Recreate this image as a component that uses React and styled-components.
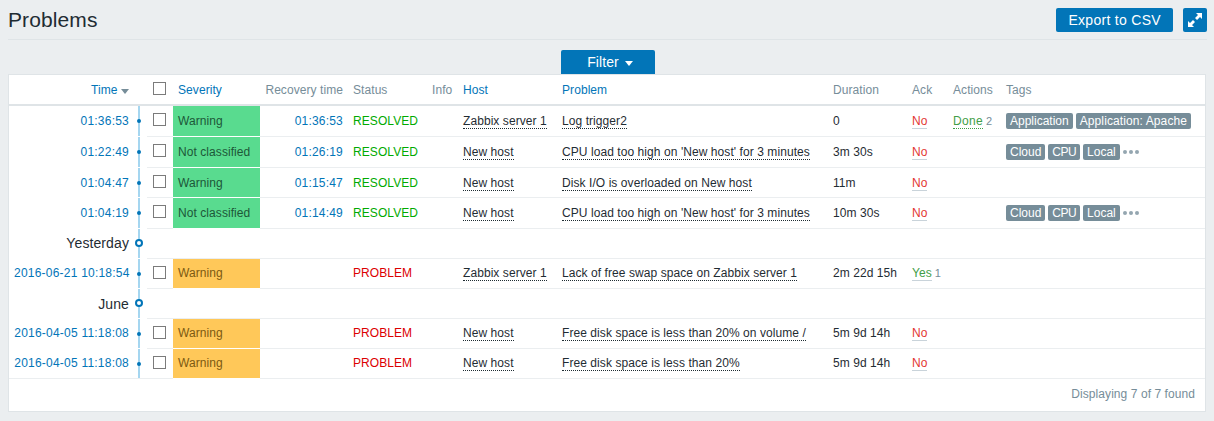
import React from "react";
import styled, { createGlobalStyle } from "styled-components";

const GlobalStyle = createGlobalStyle`
  html, body {
    margin: 0;
    padding: 0;
    background: #ebeef0;
    color: #1f2c33;
    font-family: "Liberation Sans", Arial, sans-serif;
    font-size: 12px;
    letter-spacing: 0.07px;
  }
`;

const Page = styled.div`
  padding: 8px 7px 9px 8px;
`;

const Header = styled.header`
  display: flex;
  align-items: flex-start;
  justify-content: space-between;
  height: 31px;
  border-bottom: 1px solid #dfe4e7;
`;

const Title = styled.h1`
  margin: 0;
  font-size: 21px;
  font-weight: 400;
  line-height: 24px;
  letter-spacing: 0.1px;
  color: #1f2c33;
`;

const Controls = styled.div`
  display: flex;
  gap: 10px;
`;

const Button = styled.button`
  height: 24px;
  padding: 0 12px;
  border: none;
  border-radius: 2px;
  background: #0275b8;
  color: #fff;
  font-family: inherit;
  font-size: 14px;
  letter-spacing: 0.3px;
`;

const IconButton = styled(Button)`
  display: flex;
  align-items: center;
  justify-content: center;
  width: 24px;
  padding: 0;
`;

const FilterRow = styled.div`
  display: flex;
  justify-content: center;
  padding: 10px 0 0 1px;
`;

const FilterTab = styled.button`
  display: flex;
  align-items: center;
  justify-content: center;
  gap: 6px;
  width: 94px;
  height: 24px;
  padding: 0 0 0 4px;
  border: none;
  border-radius: 2px 2px 0 0;
  background: #0275b8;
  color: #fff;
  font-family: inherit;
  font-size: 14px;
  letter-spacing: 0.1px;
`;

const Caret = styled.span`
  display: inline-block;
  width: 0;
  height: 0;
  margin-top: ${(p) => p.$top || 2}px;
  border-left: 4px solid transparent;
  border-right: 4px solid transparent;
  border-top: 5px solid ${(p) => p.$color};
`;

const Card = styled.section`
  width: 1198px;
  box-sizing: border-box;
  border: 1px solid #dfe4e7;
  background: #fff;
`;

const Table = styled.table`
  width: 1196px;
  table-layout: fixed;
  border-collapse: separate;
  border-spacing: 0;
`;

const Th = styled.th`
  box-sizing: border-box;
  height: 31px;
  padding: ${(p) => p.$top ?? 8}px 5px 0;
  vertical-align: top;
  border-bottom: 2px solid #dfe4e7;
  font-weight: 400;
  font-size: 12px;
  line-height: 14px;
  text-align: ${(p) => (p.$right ? "right" : "left")};
  color: ${(p) => (p.$link ? "#0275b8" : "#768d99")};
  white-space: nowrap;
`;

const Td = styled.td`
  box-sizing: border-box;
  height: ${(p) => p.$h}px;
  padding: ${(p) => p.$top ?? 7}px 5px 0;
  vertical-align: top;
  border-bottom: 1px solid #ebeef0;
  font-size: 12px;
  line-height: 14px;
  white-space: nowrap;
  text-align: ${(p) => (p.$right ? "right" : "left")};
`;

const TimeCell = styled(Td)`
  border-bottom-color: ${(p) => (p.$last ? "#ebeef0" : "transparent")};
  color: #0275b8;
  letter-spacing: 0.22px;
`;

const DateCell = styled(TimeCell)`
  color: #1f2c33;
  font-size: 14px;
  letter-spacing: 0.1px;
`;

const TimelineCell = styled(Td)`
  padding: 0;
  border-bottom-color: ${(p) => (p.$last ? "#ebeef0" : "transparent")};
  background: linear-gradient(#a5d6f0, #a5d6f0) no-repeat 4px 0 / 2px 100%;
`;

const Dot = styled.span`
  display: block;
  width: 4px;
  height: 4px;
  margin: 13px 0 0 3px;
  border-radius: 50%;
  background: #0275b8;
`;

const Ring = styled.span`
  display: block;
  box-sizing: border-box;
  width: 8px;
  height: 8px;
  margin: 10px 0 0 1px;
  border: 2px solid #0275b8;
  border-radius: 50%;
  background: #fff;
`;

const SeverityCell = styled(Td)`
  border-bottom-color: #fff;
  background: ${(p) => (p.$tone === "warn" ? "#ffc859" : "#59db8f")};
  color: ${(p) => (p.$tone === "warn" ? "#7d5a12" : "#1d5738")};
`;

const Check = styled.input.attrs({ type: "checkbox" })`
  appearance: none;
  display: block;
  box-sizing: border-box;
  width: 13px;
  height: 13px;
  margin: 0 0 0 1px;
  border: 1px solid #7b7b7b;
  border-radius: 0;
  background: #fff;
`;

const Link = styled.span`
  color: #1f2c33;
  border-bottom: 1px dotted #1f2c33;
`;

const TimeLink = styled.span`
  color: #0275b8;
  letter-spacing: 0.2px;
`;

const Status = styled.span`
  color: ${(p) => (p.$ok ? "#00aa00" : "#dc0000")};
`;

const Ack = styled.span`
  color: ${(p) => (p.$yes ? "#429e47" : "#e33734")};
  border-bottom: 1px solid #c9d3da;
`;

const Done = styled.span`
  color: #429e47;
  letter-spacing: 0.3px;
  border-bottom: 1px dotted #429e47;
`;

const Count = styled.span`
  margin-left: 3px;
  color: #768d99;
  font-size: 11px;
`;

const Tags = styled.div`
  display: flex;
  align-items: center;
  gap: 3px;
`;

const Tag = styled.span`
  height: 16px;
  padding: 0 4px;
  border-radius: 2px;
  background: #768d99;
  color: #fff;
  line-height: 16px;
  letter-spacing: ${(p) => p.$spacing || 0}px;
`;

const More = styled.span`
  display: flex;
  gap: 2px;
`;

const MoreDot = styled.i`
  width: 4px;
  height: 4px;
  border-radius: 50%;
  background: #94a6b0;
`;

const Footer = styled.footer`
  height: 32px;
  padding-right: 10px;
  color: #768d99;
  line-height: 31px;
  text-align: right;
`;

const columns = [125, 13, 26, 87, 88, 79, 31, 99, 271, 79, 41, 53, 204];

const cpuTags = [{ name: "Cloud" }, { name: "CPU", spacing: -0.55 }, { name: "Local" }];

const rows = [
  { time: "01:36:53", h: 31, top: 8, sev: "Warning", tone: "ok", rec: "01:36:53", ok: true, host: "Zabbix server 1", problem: "Log trigger2", dur: "0", done: "2", tags: [{ name: "Application" }, { name: "Application: Apache", spacing: 0.1 }] },
  { time: "01:22:49", h: 31, top: 8, sev: "Not classified", tone: "ok", rec: "01:26:19", ok: true, host: "New host", problem: "CPU load too high on 'New host' for 3 minutes", dur: "3m 30s", tags: cpuTags, more: true },
  { time: "01:04:47", h: 30, top: 8, sev: "Warning", tone: "ok", rec: "01:15:47", ok: true, host: "New host", problem: "Disk I/O is overloaded on New host", dur: "11m" },
  { time: "01:04:19", h: 31, top: 8, sev: "Not classified", tone: "ok", rec: "01:14:49", ok: true, host: "New host", problem: "CPU load too high on 'New host' for 3 minutes", dur: "10m 30s", tags: cpuTags, more: true },
  { date: "Yesterday", top: 7 },
  { time: "2016-06-21 10:18:54", h: 30, top: 7, sev: "Warning", tone: "warn", host: "Zabbix server 1", problem: "Lack of free swap space on Zabbix server 1", dur: "2m 22d 15h", ack: "1" },
  { date: "June", top: 8 },
  { time: "2016-04-05 11:18:08", h: 30, top: 7, sev: "Warning", tone: "warn", host: "New host", problem: "Free disk space is less than 20% on volume /", dur: "5m 9d 14h" },
  { time: "2016-04-05 11:18:08", h: 30, top: 7, sev: "Warning", tone: "warn", host: "New host", problem: "Free disk space is less than 20%", dur: "5m 9d 14h", last: true },
];

function ExpandIcon() {
  return (
    <svg width="24" height="24" viewBox="0 0 24 24" fill="#fff">
      <path d="M13 5h6v6l-2-2-3 3-2-2 3-3z" />
      <path d="M5 19v-6l2 2 3-3 2 2-3 3 2 2z" />
    </svg>
  );
}

function ProblemRow({ row }) {
  if (row.date) {
    return (
      <tr>
        <DateCell $h={30} $top={row.top} $right>
          {row.date}
        </DateCell>
        <TimelineCell $h={30}>
          <Ring />
        </TimelineCell>
        <Td $h={30} colSpan={11} />
      </tr>
    );
  }
  const { h, top } = row;
  return (
    <tr>
      <TimeCell $h={h} $top={top} $right $last={row.last}>
        {row.time}
      </TimeCell>
      <TimelineCell $h={h} $last={row.last}>
        <Dot />
      </TimelineCell>
      <Td $h={h}>
        <Check />
      </Td>
      <SeverityCell $h={h} $top={top} $tone={row.tone}>
        {row.sev}
      </SeverityCell>
      <Td $h={h} $top={top} $right>
        {row.rec && <TimeLink>{row.rec}</TimeLink>}
      </Td>
      <Td $h={h} $top={top}>
        <Status $ok={row.ok}>{row.ok ? "RESOLVED" : "PROBLEM"}</Status>
      </Td>
      <Td $h={h} />
      <Td $h={h} $top={top}>
        <Link>{row.host}</Link>
      </Td>
      <Td $h={h} $top={top}>
        <Link>{row.problem}</Link>
      </Td>
      <Td $h={h} $top={top}>
        {row.dur}
      </Td>
      <Td $h={h} $top={top}>
        <Ack $yes={!!row.ack}>{row.ack ? "Yes" : "No"}</Ack>
        {row.ack && <Count>{row.ack}</Count>}
      </Td>
      <Td $h={h} $top={top}>
        {row.done && (
          <>
            <Done>Done</Done>
            <Count>{row.done}</Count>
          </>
        )}
      </Td>
      <Td $h={h}>
        {row.tags && (
          <Tags>
            {row.tags.map((t) => (
              <Tag key={t.name} $spacing={t.spacing}>
                {t.name}
              </Tag>
            ))}
            {row.more && (
              <More>
                <MoreDot />
                <MoreDot />
                <MoreDot />
              </More>
            )}
          </Tags>
        )}
      </Td>
    </tr>
  );
}

export default function App() {
  return (
    <Page>
      <GlobalStyle />
      <Header>
        <Title>Problems</Title>
        <Controls>
          <Button>Export to CSV</Button>
          <IconButton aria-label="Fullscreen">
            <ExpandIcon />
          </IconButton>
        </Controls>
      </Header>
      <FilterRow>
        <FilterTab>
          Filter <Caret $color="#fff" />
        </FilterTab>
      </FilterRow>
      <Card>
        <Table>
          <colgroup>
            {columns.map((w, i) => (
              <col key={i} width={w} />
            ))}
          </colgroup>
          <thead>
            <tr>
              <Th $link $right>
                Time <Caret $color="#768d99" $top={0} />
              </Th>
              <Th />
              <Th $top={7}>
                <Check />
              </Th>
              <Th $link>Severity</Th>
              <Th $right>Recovery time</Th>
              <Th>Status</Th>
              <Th>Info</Th>
              <Th $link>Host</Th>
              <Th $link>Problem</Th>
              <Th>Duration</Th>
              <Th>Ack</Th>
              <Th>Actions</Th>
              <Th>Tags</Th>
            </tr>
          </thead>
          <tbody>
            {rows.map((row, i) => (
              <ProblemRow key={i} row={row} />
            ))}
          </tbody>
        </Table>
        <Footer>Displaying 7 of 7 found</Footer>
      </Card>
    </Page>
  );
}
